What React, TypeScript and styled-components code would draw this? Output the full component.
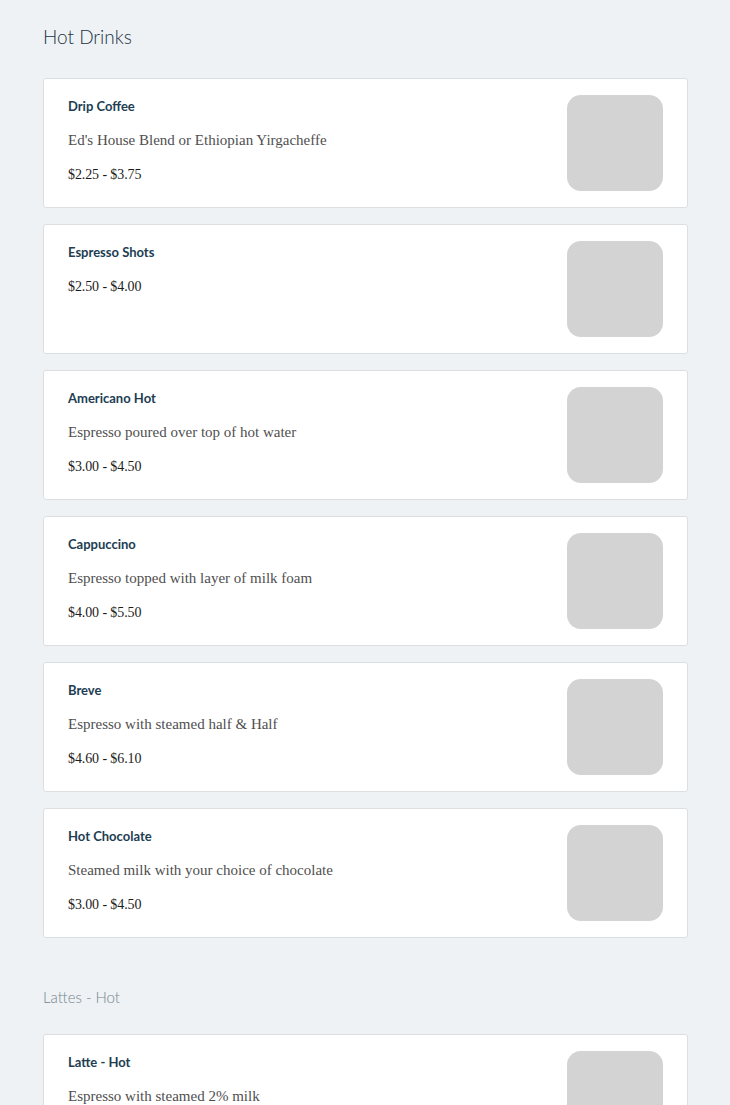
import React from 'react';
import styled, { createGlobalStyle } from 'styled-components';

const GlobalStyle = createGlobalStyle`
  html, body {
    margin: 0;
    padding: 0;
    background: #eef2f5;
  }
`;

const Page = styled.div`
  padding: 22px 42px 0 43px;
  font-family: Lato, 'Open Sans', sans-serif;
`;

const Section = styled.section`
  & + & {
    margin-top: 47px;
  }
`;

const Heading = styled.h2<{ $active?: boolean }>`
  margin: 0 0 ${props => (props.$active ? '26px' : '25px')};
  font-family: Lato, sans-serif;
  font-weight: 300;
  font-size: ${props => (props.$active ? '19px' : '15px')};
  line-height: ${props => (props.$active ? '30px' : '24px')};
  color: ${props => (props.$active ? '#1b3242' : '#74858f')};
`;

const List = styled.div`
  display: flex;
  flex-direction: column;
  gap: 16px;
`;

const Card = styled.div`
  display: flex;
  align-items: flex-start;
  justify-content: space-between;
  background: #fff;
  border: 1px solid #dcdfe2;
  border-radius: 3px;
  padding: 16px 24px;
`;

const Info = styled.div`
  display: flex;
  flex-direction: column;
`;

const Name = styled.div`
  font-family: Lato, sans-serif;
  font-weight: 700;
  font-size: 13px;
  line-height: 22px;
  color: #213d52;
`;

const Description = styled.div`
  margin-top: 12px;
  font-family: 'Liberation Serif', serif;
  font-size: 15px;
  line-height: 22px;
  color: #4f4f4f;
`;

const Price = styled.div`
  margin-top: 13px;
  font-family: 'Liberation Serif', serif;
  font-size: 14px;
  letter-spacing: -0.1px;
  line-height: 22px;
  color: #1c1c1c;
`;

const Thumb = styled.div`
  width: 96px;
  height: 96px;
  flex-shrink: 0;
  border-radius: 14px;
  background: #d3d3d3;
`;

type Item = { name: string; description?: string; price: string };

const sections: { title: string; items: Item[] }[] = [
  {
    title: 'Hot Drinks',
    items: [
      { name: 'Drip Coffee', description: "Ed's House Blend or Ethiopian Yirgacheffe", price: '$2.25 - $3.75' },
      { name: 'Espresso Shots', price: '$2.50 - $4.00' },
      { name: 'Americano Hot', description: 'Espresso poured over top of hot water', price: '$3.00 - $4.50' },
      { name: 'Cappuccino', description: 'Espresso topped with layer of milk foam', price: '$4.00 - $5.50' },
      { name: 'Breve', description: 'Espresso with steamed half & Half', price: '$4.60 - $6.10' },
      { name: 'Hot Chocolate', description: 'Steamed milk with your choice of chocolate', price: '$3.00 - $4.50' },
    ],
  },
  {
    title: 'Lattes - Hot',
    items: [
      { name: 'Latte - Hot', description: 'Espresso with steamed 2% milk', price: '$4.00 - $5.50' },
    ],
  },
];

function MenuCard({ item }: { item: Item }) {
  return (
    <Card>
      <Info>
        <Name>{item.name}</Name>
        {item.description && <Description>{item.description}</Description>}
        <Price>{item.price}</Price>
      </Info>
      <Thumb />
    </Card>
  );
}

function App() {
  return (
    <>
      <GlobalStyle />
      <Page>
        {sections.map((section, i) => (
          <Section key={section.title}>
            <Heading $active={i === 0}>{section.title}</Heading>
            <List>
              {section.items.map(item => (
                <MenuCard key={item.name} item={item} />
              ))}
            </List>
          </Section>
        ))}
      </Page>
    </>
  );
}

export default App;
